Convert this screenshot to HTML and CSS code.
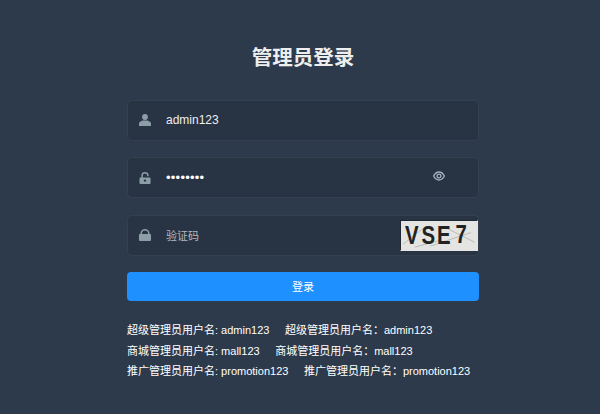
FILE: index.html
```html
<!DOCTYPE html>
<html lang="zh-CN">
<head>
    <meta charset="UTF-8">
    <title>管理员登录</title>
    <link rel="stylesheet" href="styles.css">
</head>
<body>
    <div class="login">
        <h1>管理员登录</h1>

        <div class="field">
            <svg class="icon" viewBox="0 0 12 12"><ellipse cx="6" cy="3" rx="2.900" ry="3"/><path d="M0 12V9.800C0 8.200 2 7 3.600 6.600h4.800C10 7 12 8.200 12 9.800V12z"/></svg>
            <span class="value">admin123</span>
        </div>

        <div class="field">
            <svg class="icon" viewBox="0 0 12 13"><path d="M2 6V4a4 4 0 0 1 8 0v.6H8.400V4a2.400 2.400 0 0 0-4.800 0v2H11a1 1 0 0 1 1 1v5a1 1 0 0 1-1 1H1a1 1 0 0 1-1-1V7a1 1 0 0 1 1-1z"/><circle class="hole" cx="6" cy="9.300" r="1.300"/></svg>
            <span class="dots">••••••••</span>
            <svg class="eye" viewBox="0 0 12 10"><path d="M.6 5C2 2.400 3.800 1 6 1s4 1.400 5.400 4C10 7.600 8.200 9 6 9S2 7.600.6 5z"/><circle cx="6" cy="5" r="1.900"/></svg>
        </div>

        <div class="field">
            <svg class="icon" viewBox="0 0 12 12"><path d="M1.500 5V4a4.500 4 0 0 1 9 0v1h.5a1 1 0 0 1 1 1v5a1 1 0 0 1-1 1H1a1 1 0 0 1-1-1V6a1 1 0 0 1 1-1zM3 5h6V4a3 2.600 0 0 0-6 0z"/></svg>
            <span class="placeholder">验证码</span>
            <div class="captcha">
                <svg viewBox="0 0 78 30">
                    <path class="noise" d="M2 24L22 8M14 27L40 20M44 6L76 22M30 26L72 12"/>
                    <text x="4.500" y="21.800" transform="scale(.88 1.100)">V</text>
                    <text x="23.900" y="21.800" transform="scale(.88 1.100)">S</text>
                    <text x="42" y="21.800" transform="scale(.88 1.100)">E</text>
                    <text x="63.600" y="20.800" transform="scale(.88 1.100)">7</text>
                </svg>
            </div>
        </div>

        <button class="submit">登录</button>

        <div class="tips">
            <p><span>超级管理员用户名: admin123</span><span>超级管理员用户名：admin123</span></p>
            <p><span>商城管理员用户名: mall123</span><span>商城管理员用户名：mall123</span></p>
            <p><span>推广管理员用户名: promotion123</span><span>推广管理员用户名：promotion123</span></p>
        </div>
    </div>
</body>
</html>
```

FILE: styles.css
```css
html, body {
    height: 100%;
}

body {
    margin: 0;
    background-color: #2d3a4b;
    font-family: "Liberation Sans", "Noto Sans CJK SC", sans-serif;
    overflow: hidden;
}

.login {
    width: 352px;
    margin: 0 auto;
    padding: 44px 0 0 6px;
}

h1 {
    margin: 0 0 28.500px;
    font-size: 20.5px;
    line-height: 27px;
    font-weight: 700;
    color: #eeeeee;
    text-align: center;
}

.field {
    display: flex;
    align-items: center;
    box-sizing: border-box;
    height: 41px;
    margin-bottom: 16.5px;
    padding-left: 11px;
    background-color: rgba(0, 0, 0, 0.1);
    border: 1px solid rgba(255, 255, 255, 0.06);
    border-radius: 5px;
    color: #eeeeee;
}

.icon {
    flex: none;
    width: 12px;
    height: 12px;
    margin-right: 15px;
    fill: #8d9ea9;
}

.icon .hole {
    fill: #2a3644;
}

.value {
    font-size: 12px;
}

.dots {
    font-size: 13px;
    letter-spacing: 0.25px;
    color: #ffffff;
}

.eye {
    width: 12px;
    height: 10px;
    margin-left: auto;
    margin-right: 33px;
    margin-top: -4px;
    fill: none;
    stroke: #a3b2bc;
    stroke-width: 1.3;
}

.placeholder {
    font-size: 11px;
    color: #b4b9be;
}

.captcha {
    box-sizing: border-box;
    width: 78px;
    height: 31px;
    margin-left: auto;
    background-color: #e4e4e2;
    border: 1px solid #1f2833;
    border-right-color: #e4e4e2;
    border-bottom-color: #e4e4e2;
}

.captcha svg {
    display: block;
    width: 100%;
    height: 100%;
}

.captcha text {
    font-family: "Liberation Sans", sans-serif;
    font-size: 24px;
    font-weight: 700;
    fill: #222222;
}

.noise {
    fill: none;
    stroke: #9a9a9a;
    stroke-width: 0.6;
}

.submit {
    display: block;
    width: 100%;
    height: 29px;
    margin: 0 0 19px;
    padding: 0 0 2px;
    border: none;
    border-radius: 4px;
    background-color: #1e90ff;
    font-family: inherit;
    font-size: 11px;
    color: #ffffff;
}

.tips p {
    display: flex;
    gap: 15.500px;
    margin: 0;
    font-size: 11px;
    line-height: 20.5px;
    color: #ffffff;
    white-space: nowrap;
}
```
